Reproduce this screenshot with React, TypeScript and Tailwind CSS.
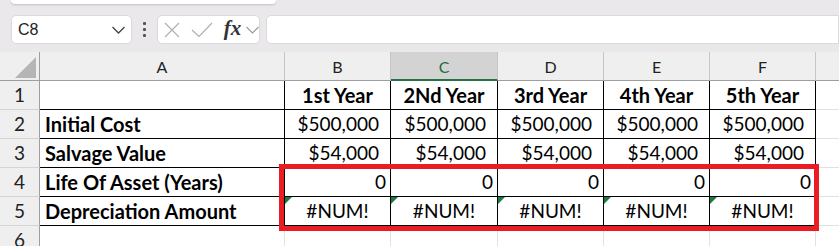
import React from 'react';

const cols = ['A', 'B', 'C', 'D', 'E', 'F'];

type Cell = { text: string; align: 'left' | 'right' | 'center'; bold?: boolean; flag?: boolean; pad?: string };

const rows: Cell[][] = [
  [
    { text: '', align: 'left' },
    ...['1st Year', '2Nd Year', '3rd Year', '4th Year', '5th Year'].map((t) => ({ text: t, align: 'center' as const, bold: true })),
  ],
  [
    { text: 'Initial Cost', align: 'left', bold: true },
    ...Array(5).fill(0).map(() => ({ text: '$500,000', align: 'right' as const, pad: 'pr-[11px]' })),
  ],
  [
    { text: 'Salvage Value', align: 'left', bold: true },
    ...Array(5).fill(0).map(() => ({ text: '$54,000', align: 'right' as const, pad: 'pr-[11px]' })),
  ],
  [
    { text: 'Life Of Asset (Years)', align: 'left', bold: true },
    ...Array(5).fill(0).map(() => ({ text: '0', align: 'right' as const, pad: 'pr-[4px]' })),
  ],
  [
    { text: 'Depreciation Amount', align: 'left', bold: true },
    ...Array(5).fill(0).map(() => ({ text: '#NUM!', align: 'center' as const, flag: true })),
  ],
];

function Toolbar() {
  return (
    <div className="h-[52px] bg-[#ebe8eb] flex flex-col">
      {/* bottom edge of the ribbon panel above */}
      <div className="h-[4px] ml-[11px] w-[265px] bg-white rounded-b-[5px] shadow-[0_1px_2px_rgba(0,0,0,0.18)]" />
      <div className="flex items-center pl-[11px] pt-[11px]">
        <div className="w-[126px] h-[29px] bg-white border border-[#dadada] rounded-[5px] flex items-center justify-between pl-[6px] pr-[6px]">
          <span className="text-[16px] text-[#222] font-['Liberation_Sans',sans-serif]">C8</span>
          <svg width="13" height="8" viewBox="0 0 13 8">
            <polyline points="0.5,1 6.5,7 12.5,1" fill="none" stroke="#444" strokeWidth="1.3" />
          </svg>
        </div>
        <div className="w-[26px] h-[29px] flex flex-col items-center justify-center gap-[3px]">
          <span className="w-[3px] h-[3px] bg-[#555] rounded-[1px]" />
          <span className="w-[3px] h-[3px] bg-[#555] rounded-[1px]" />
          <span className="w-[3px] h-[3px] bg-[#555] rounded-[1px]" />
        </div>
        <div className="w-[106px] h-[29px] bg-white border border-[#dadada] rounded-[5px] flex items-center pl-[6px]">
          <svg width="16" height="16" viewBox="0 0 16 16">
            <path d="M1 1 L15 15 M15 1 L1 15" stroke="#b0b0b0" strokeWidth="1.2" fill="none" />
          </svg>
          <svg width="22" height="16" viewBox="0 0 22 16" className="ml-[11px]">
            <polyline points="1,8 8,14.5 21,1" stroke="#b0b0b0" strokeWidth="1.2" fill="none" />
          </svg>
          <span className="ml-[11px] text-[21px] leading-none italic text-[#333] font-['Liberation_Serif',serif] font-semibold -mt-[2px]">fx</span>
          <svg width="13" height="8" viewBox="0 0 13 8" className="ml-[5px]">
            <polyline points="0.5,1 6.5,7 12.5,1" fill="none" stroke="#999" strokeWidth="1.1" />
          </svg>
        </div>
        <div className="ml-[6px] w-[600px] h-[29px] bg-white border border-[#dadada] rounded-l-[5px]" />
      </div>
    </div>
  );
}

function Sheet() {
  const base = "h-[29px] font-['Lato',sans-serif] text-[19px] leading-[28px] whitespace-nowrap overflow-hidden";
  return (
    <div className="relative">
      <div className="grid grid-cols-[40px_245px_106px_107px_106px_106px_106px_1fr]">
        {/* header row */}
        <div className="h-[29px] bg-[#efefef] border-r border-b border-[#9e9e9e] relative">
          <svg width="22" height="21" viewBox="0 0 22 21" className="absolute left-[15px] top-[5px]">
            <polygon points="21,0 21,21 0,21" fill="#b5b5b5" />
          </svg>
        </div>
        {cols.map((c) =>
          c === 'C' ? (
            <div key={c} className="h-[29px] bg-[#d3d3d3] border-r border-r-[#c6c6c6] border-b-2 border-b-[#217346] text-center text-[16px] leading-[26px] pt-[2px] text-[#1e6b41] font-['Lato',sans-serif]">
              {c}
            </div>
          ) : (
            <div key={c} className="h-[29px] bg-[#efefef] border-r border-r-[#c6c6c6] border-b border-b-[#9e9e9e] text-center text-[16px] leading-[26px] pt-[2px] text-[#222] font-['Lato',sans-serif]">
              {c}
            </div>
          )
        )}
        <div className="h-[29px] bg-[#efefef] border-b border-[#9e9e9e]" />

        {rows.map((r, i) => (
          <React.Fragment key={i}>
            <div className={`${base} bg-[#efefef] border-r border-r-[#9e9e9e] border-b border-b-[#d4d4d4] text-center text-[#222]`}>
              {i + 1}
            </div>
            {r.map((cell, j) => (
              <div
                key={j}
                className={`${base} relative border-r border-b border-black text-black ${cell.bold ? 'font-bold text-[20px]' : ''} ${
                  cell.align === 'left' ? 'text-left pl-[5px]' : cell.align === 'right' ? 'text-right' : 'text-center'
                } ${cell.pad ?? ''}`}
              >
                {cell.flag && (
                  <svg width="7" height="7" viewBox="0 0 7 7" className="absolute left-0 top-0">
                    <polygon points="0,0 7,0 0,7" fill="#1b7a3e" />
                  </svg>
                )}
                {cell.text}
              </div>
            ))}
            <div className="h-[29px] border-b border-[#e1e1e1]" />
          </React.Fragment>
        ))}

        {/* row 6 */}
        <div className={`${base} bg-[#efefef] border-r border-r-[#9e9e9e] text-center text-[#222]`}>6</div>
        {cols.map((c) => (
          <div key={c} className="h-[29px] border-r border-[#e1e1e1]" />
        ))}
        <div className="h-[29px]" />
      </div>

      {/* highlight box */}
      <div className="absolute left-[279px] top-[112px] w-[540px] h-[67px] border-[5px] border-[#ec1c24] pointer-events-none" />
    </div>
  );
}

export default function App() {
  return (
    <div className="w-[839px] h-[246px] overflow-hidden bg-white">
      <Toolbar />
      <Sheet />
    </div>
  );
}
